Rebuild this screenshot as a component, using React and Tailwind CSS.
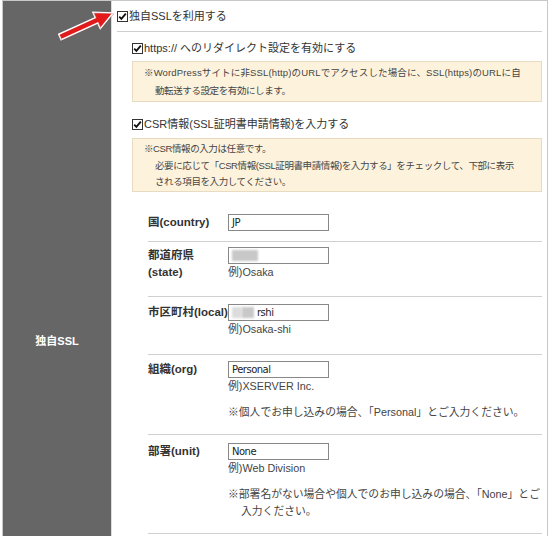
import React from "react";

const font = { fontFamily: '"Liberation Sans", "Noto Sans CJK JP", sans-serif' };

const Check = () => (
  <svg width="11" height="11" viewBox="0 0 11 11" className="shrink-0">
    <rect x="0.5" y="0.5" width="10" height="10" fill="#fff" stroke="#333" />
    <path d="M2.2 5.6 L4.4 7.9 L8.8 2.6" fill="none" stroke="#111" strokeWidth="1.8" />
  </svg>
);

const CheckRow = ({ children, className = "" }) => (
  <div className={"flex items-center gap-[1px] text-[11px] text-[#333] leading-[16px] whitespace-nowrap " + className}>
    <Check />
    <span>{children}</span>
  </div>
);

const Input = ({ children }) => (
  <div className="relative z-10 w-[101px] h-[17px] border border-[#888] bg-white flex items-center px-[3px] text-[10px] text-[#222] leading-none" style={{ fontFamily: '"DejaVu Sans", sans-serif', letterSpacing: "-0.5px" }}>
    {children}
  </div>
);

const Blur = ({ w, dark }) => (
  <span className={"inline-block h-[11px] blur-[1px] " + (dark ? "bg-[#c8c8c8] " : "bg-[#dcdcdc] ") + w} />
);

const Field = ({ label, label2, input, children, h, pt = "pt-[11px]" }) => (
  <div className={"flex border-b border-[#d0d0d0] " + pt + " " + h}>
    <div className="w-[80px] shrink-0 text-[11.5px] font-bold text-[#333] leading-[17px] whitespace-nowrap">
      <div>{label}</div>
      {label2 && <div>{label2}</div>}
    </div>
    <div className="flex-1 min-w-0 text-[10.8px] text-[#444] leading-[17px] whitespace-nowrap">
      {input}
      {children}
    </div>
  </div>
);

export default function App() {
  return (
    <div className="relative w-[550px] h-[536px] bg-white overflow-hidden" style={font}>
      <div className="ml-[2px] w-[546px] h-[560px] border border-[#c8c8c8] flex">
        {/* left header */}
        <div className="w-[108px] shrink-0 bg-[#666666] flex items-center justify-center pt-[123px]">
          <span className="text-white font-bold text-[11px]">独自SSL</span>
        </div>
        {/* right cell */}
        <div className="flex-1 min-w-0 pl-[5px] pr-[5px] border-l border-[#ddd] overflow-hidden">
          <div className="border-b border-[#cfcfcf] pt-[7px] h-[31px]">
            <CheckRow>独自SSLを利用する</CheckRow>
          </div>

          <div className="pl-[15px]">
            <CheckRow className="mt-[8px]">https:// へのリダイレクト設定を有効にする</CheckRow>
            <div className="mt-[5px] h-[41px] bg-[#fdf3dd] border border-[#e7dcc2] pl-[11px] pr-[4px] pt-[2px] text-[9.5px] text-[#444] leading-[18px] whitespace-nowrap overflow-hidden">
              <div className="tracking-[0.15px]">※WordPressサイトに非SSL(http)のURLでアクセスした場合に、SSL(https)のURLに自</div>
              <div className="pl-[11px] tracking-[-0.4px]">動転送する設定を有効にします。</div>
            </div>

            <CheckRow className="mt-[14px]">CSR情報(SSL証明書申請情報)を入力する</CheckRow>
            <div className="mt-[6px] h-[54px] bg-[#fdf3dd] border border-[#e7dcc2] pl-[11px] pr-[4px] pt-[2px] text-[9.5px] text-[#444] leading-[16.5px] whitespace-nowrap tracking-[-0.4px] overflow-hidden">
              <div>※CSR情報の入力は任意です。</div>
              <div className="pl-[11px]">必要に応じて「CSR情報(SSL証明書申請情報)を入力する」をチェックして、下部に表示</div>
              <div className="pl-[11px]">される項目を入力してください。</div>
            </div>

            <div className="pl-[16px] mt-[22px]">
              <Field label="国(country)" h="h-[28px]" pt="pt-[0px]" input={<Input>JP</Input>} />
              <Field label="都道府県" label2="(state)" h="h-[55px]" pt="pt-[5px]" input={<Input><Blur w="w-[26px]" dark /></Input>}>
                <div>例)Osaka</div>
              </Field>
              <Field label="市区町村(local)" h="h-[58px]" pt="pt-[7px]" input={<Input><Blur w="w-[10px]" /><Blur w="w-[12px]" dark /><span className="ml-[3px]">rshi</span></Input>}>
                <div>例)Osaka-shi</div>
              </Field>
              <Field label="組織(org)" h="h-[80px]" pt="pt-[6px]" input={<Input>Personal</Input>}>
                <div>例)XSERVER Inc.</div>
                <div className="mt-[9px]">※個人でお申し込みの場合、「Personal」とご入力ください。</div>
              </Field>
              <Field label="部署(unit)" h="h-[99px]" pt="pt-[8px]" input={<Input>None</Input>}>
                <div>例)Web Division</div>
                <div className="mt-[9px]">※部署名がない場合や個人でのお申し込みの場合、「None」とご</div>
                <div className="pl-[13px]">入力ください。</div>
              </Field>
            </div>
          </div>
        </div>
      </div>

      {/* red arrow */}
      <svg className="absolute left-0 top-0" width="550" height="536" viewBox="0 0 550 536">
        <path
          d="M58.8 34.3 L95.4 17.7 L92.9 12.2 L113 13 L100.3 28.6 L97.8 23.1 L61.2 39.7 Z"
          fill="#e4191a"
          stroke="#ffffff"
          strokeWidth="1.5"
          strokeLinejoin="miter"
        />
        <path
          d="M58.8 34.3 L95.4 17.7 L92.9 12.2 L113 13 L100.3 28.6 L97.8 23.1 L61.2 39.7 Z"
          fill="none"
          stroke="#9a2a2a"
          strokeWidth="0.5"
          transform="translate(0.8 0.8)"
          opacity="0.5"
        />
      </svg>
    </div>
  );
}
